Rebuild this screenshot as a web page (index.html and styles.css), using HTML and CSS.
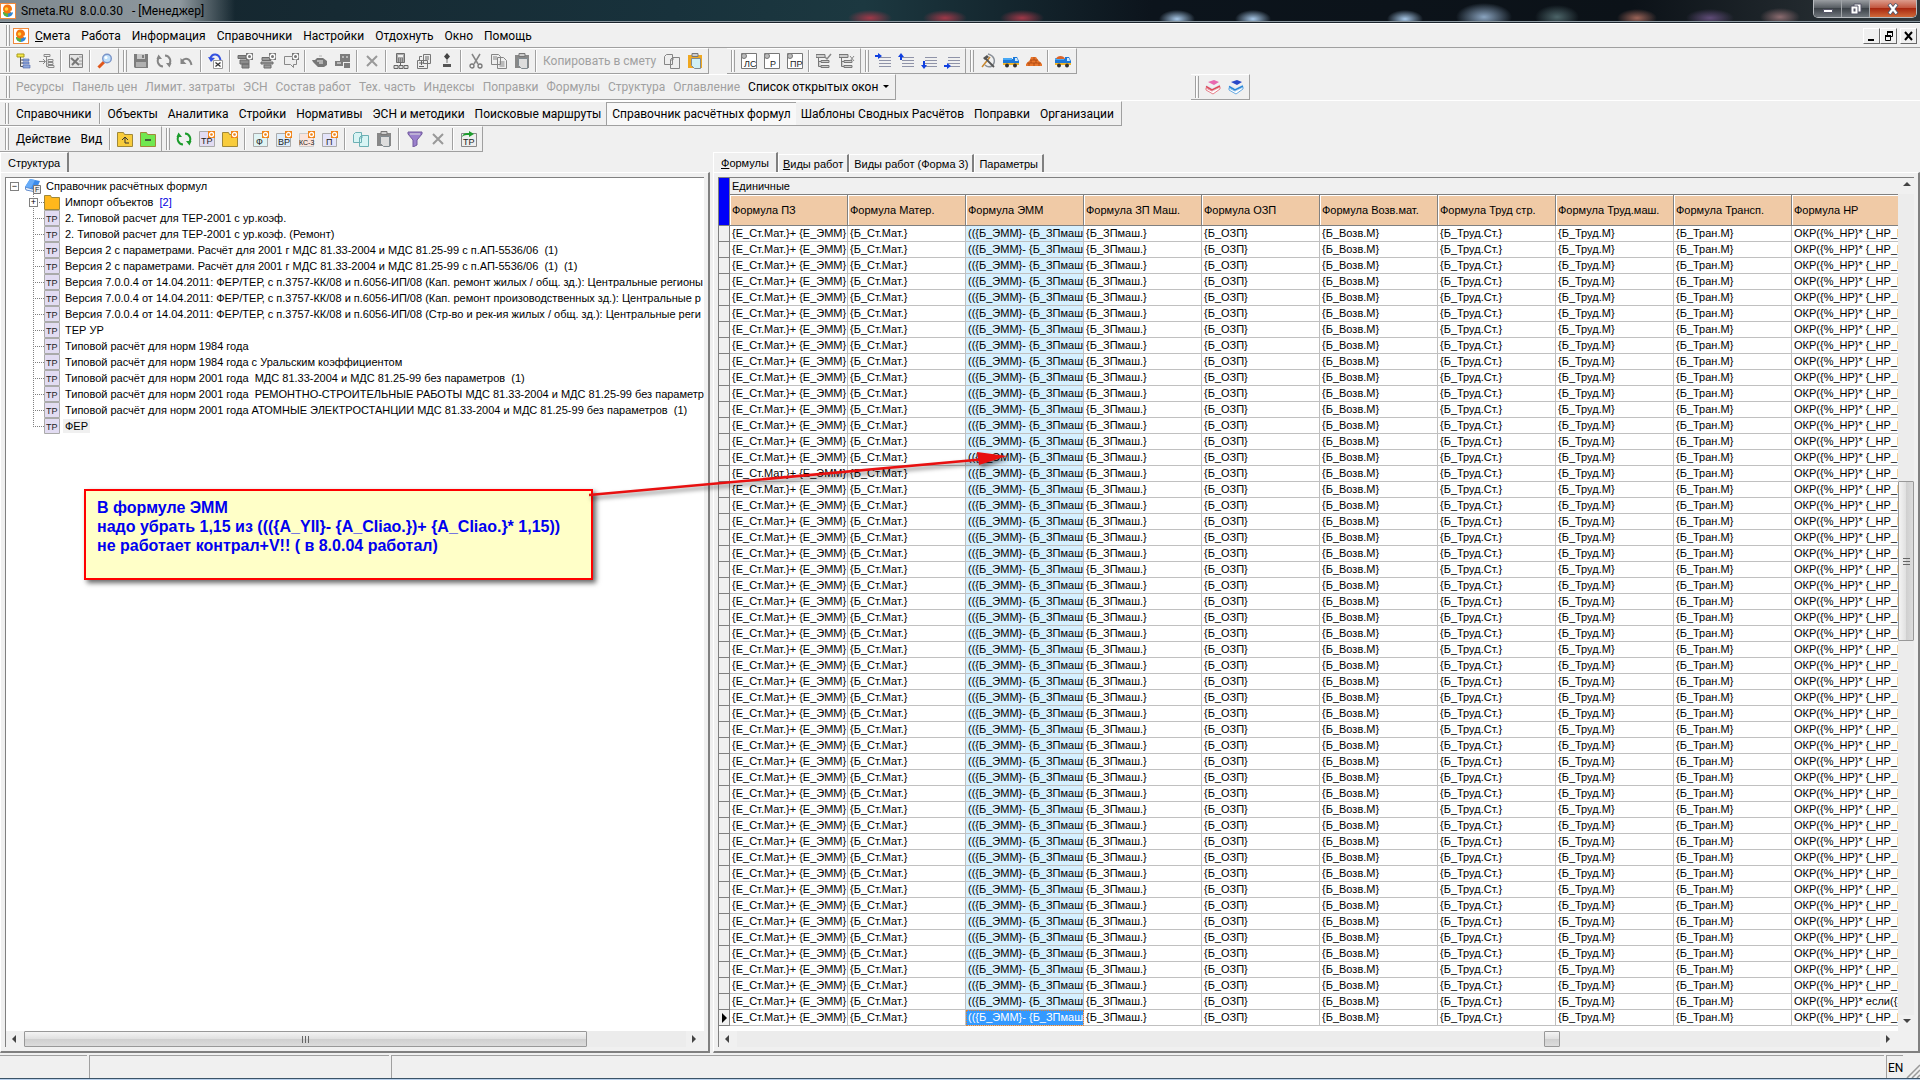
FILE: index.html
```html
<!DOCTYPE html>
<html lang="ru">
<head>
    <meta charset="UTF-8">
    <meta name="viewport" content="width=device-width, initial-scale=1.0">
    <title>Smeta.RU 8.0.0.30 - [Менеджер]</title>
    <link rel="stylesheet" href="styles.css">
</head>
<body>
    <svg class="sprite">
        <symbol id="logo" viewBox="0 0 16 16"><rect x=".5" y=".5" width="15" height="15" fill="#fff" stroke="#f08a3c"/><path d="M3 9a5 5 0 0 0 10 0z" fill="#2f86d8"/><path d="M3 9h5v5a5 5 0 0 1-5-5z" fill="#58b53c"/><circle cx="7.500" cy="6" r="4.500" fill="#f5760f"/><circle cx="6.500" cy="6" r="1.800" fill="#ffd23c"/><path d="M10 8l4-1-2 3z" fill="#fff"/></symbol>
        <symbol id="tree" viewBox="0 0 16 16"><path d="M1 1h7v3H1z" fill="#f6e94a" stroke="#a89b1a"/><path d="M4.500 4v9.500H7M4.500 7H7M4.500 10H7" fill="none" stroke="#555"/><path d="M7 6h6v2H7zM7 9h6v2H7zM7 12h7v3H7z" fill="#8fa8dc" stroke="#4a62a8" stroke-width=".6"/></symbol>
        <symbol id="tree-in" viewBox="0 0 16 16"><path d="M5 1.500h6v2H5zM9 6.500h5v2H9zM9 9.500h5v2H9zM9 12.500h6v2H9zM7.500 4v9.500H9M0 8.500h6M4 6l2.500 2.500L4 11" fill="none" stroke="#8a8a8a"/></symbol>
        <symbol id="excel" viewBox="0 0 16 16"><path d="M1.500 1.500h13v13h-13z" fill="#e4e4e4" stroke="#808080"/><path d="M3 5l8 7M10.500 5L4 12" stroke="#777" stroke-width="2"/><path d="M11 4h3M11 8h3M11 11h3" stroke="#999"/></symbol>
        <symbol id="find" viewBox="0 0 16 16"><path d="M1.500 14.500L7 9" stroke="#e0571c" stroke-width="3"/><circle cx="10" cy="5.500" r="4.300" fill="#bfe0fb" stroke="#7a94c8" stroke-width="1.400"/><circle cx="9" cy="4.500" r="1.500" fill="#fff"/></symbol>
        <symbol id="save" viewBox="0 0 16 16"><path d="M1 1h14v14H2l-1-1z" fill="#7d7d7d"/><path d="M4 1h8v5H4z" fill="#c9c9c9"/><path d="M9 2h2v3H9z" fill="#7d7d7d"/><path d="M3 9h10v5H3z" fill="#b0b0b0"/></symbol>
        <symbol id="refresh" viewBox="0 0 16 16"><path d="M9 2.500a5.500 5.500 0 0 1 4 9M7 13.500a5.500 5.500 0 0 1-4-9" fill="none" stroke="currentColor" stroke-width="2"/><path d="M10 10h5.500l-2 4.500zM6 6H.500l2-4.500z" fill="currentColor"/></symbol>
        <symbol id="undo" viewBox="0 0 16 16"><path d="M3 8c3-3.500 8-3 9.500 4" fill="none" stroke="#858585" stroke-width="2"/><path d="M1.500 5v6h6z" fill="#858585"/></symbol>
        <symbol id="undo-doc" viewBox="0 0 16 16"><path d="M2 6C4-.500 11 0 12.500 7" fill="none" stroke="#3452e0" stroke-width="2"/><path d="M0 4l3 5 4-4z" fill="#3452e0"/><path d="M5.500 7.500h9v8h-9z" fill="#fff" stroke="#999"/><path d="M7.500 9.500l5 4M12.500 9.500l-5 4" stroke="#333" stroke-width="1.300"/></symbol>
        <symbol id="gear" viewBox="0 0 16 16"><path d="M9 0h7v7H9z" fill="#777"/><circle cx="12.500" cy="3.500" r="2.200" fill="none" stroke="#fff" stroke-width="1.400"/></symbol>
        <symbol id="stack-up" viewBox="0 0 16 16"><path d="M1 2.500h8v3H1zM3 7h9v4H3zM5 11h7v4H5z" fill="#8c8c8c" stroke="#6c6c6c"/><use href="#gear"/></symbol>
        <symbol id="stack-down" viewBox="0 0 16 16"><path d="M2 4.500h9v3H2zM1 9h12v2H1zM4 12h7v3H4z" fill="#9c9c9c" stroke="#6c6c6c"/><use href="#gear"/></symbol>
        <symbol id="comment" viewBox="0 0 16 16"><path d="M1.500 3.500h12v8h-3v3l-3-3h-6z" fill="#eee" stroke="#888"/><use href="#gear"/></symbol>
        <symbol id="pot" viewBox="0 0 16 16"><path d="M0 7h3l2-2h6l4 3v4l-3 2H6L1 9z" fill="#777"/><path d="M5 8h6M7 3h3M7 10h4" stroke="#c8c8c8" stroke-width="1.500"/></symbol>
        <symbol id="blocks" viewBox="0 0 16 16"><path d="M5 1h10v8H5zM0 8h8v5H0zM9 10h6v5H9z" fill="#7c7c7c"/><path d="M7 3h2v2H7zM11 3h2v2h-2zM2 9h4v2H2z" fill="#b8b8b8"/></symbol>
        <symbol id="cross" viewBox="0 0 16 16"><path d="M3 3l10 10M13 3L3 13" stroke="#999" stroke-width="2"/></symbol>
        <symbol id="calc" viewBox="0 0 16 16"><path d="M3.500.500h8v9h-8z" fill="#aaa" stroke="#6c6c6c"/><path d="M5 2h5v2H5z" fill="#eee"/><path d="M5 6h5M5 8h5" stroke="#555" stroke-dasharray="1 1"/><path d="M7.500 10v2M1 12.500h4v3H1zM6 12.500h4v3H6zM11 12.500h4v3h-4z" fill="#ddd" stroke="#666"/></symbol>
        <symbol id="page-plus" viewBox="0 0 16 16"><path d="M7.500 1.500h7v9h-7zM1.500 7.500h10v8h-10z" fill="#eee" stroke="#777"/><path d="M9 4h4M9 6h4M3 10h5M5.500 8v4M3 13.500h5" stroke="#666"/><path d="M3.500 7V3.500H6" fill="none" stroke="#777"/></symbol>
        <symbol id="plus-minus" viewBox="0 0 16 16"><path d="M8 0l3 3.500L8 7 5 3.500z" fill="#444"/><path d="M8 7v3" stroke="#777"/><path d="M4 11h8v3H4z" fill="#555"/></symbol>
        <symbol id="cut" viewBox="0 0 16 16"><path d="M4 1l6 10M12 1L6 11" stroke="#858585" stroke-width="1.500"/><circle cx="4" cy="13" r="2" fill="none" stroke="#777" stroke-width="1.300"/><circle cx="12" cy="13" r="2" fill="none" stroke="#777" stroke-width="1.300"/></symbol>
        <symbol id="copy" viewBox="0 0 16 16"><path d="M.500 1.500h7l2 2v8h-9zM6.500 4.500h6l3 3v8h-9z" fill="var(--fill,#eee)" stroke="currentColor"/><path d="M2 4h4M2 6h4M8.500 9h5M8.500 11h5M8.500 13h5" stroke="currentColor"/></symbol>
        <symbol id="copy-blank" viewBox="0 0 16 16"><path d="M.500 3.500l2-2h6v10h-8zM6.500 6.500l2-2h7v11h-9z" fill="var(--fill,#eee)" stroke="currentColor"/><path d="M9 5v2H7" fill="none" stroke="currentColor"/></symbol>
        <symbol id="paste" viewBox="0 0 16 16"><path d="M1 2h14v13H1z" fill="var(--board,#888)"/><path d="M5 .500h6v3H5z" fill="#ccc" stroke="#777"/><path d="M4.500 5.500h9v10h-6l-3-3z" fill="var(--fill,#ddd)" stroke="#808a90"/></symbol>
        <symbol id="check-tree" viewBox="0 0 16 16"><path d="M0 1.500h9v3H0zM5 7.500h8v2H5zM5 12.500h8v2H5zM2.500 5v8.500H5M2.500 8.500H5" fill="#ccc" stroke="#777"/><path d="M9 4l2 2 4-5" fill="none" stroke="#888" stroke-width="1.500"/></symbol>
        <symbol id="cross-tree" viewBox="0 0 16 16"><path d="M0 1.500h9v3H0zM5 7.500h8v2H5zM5 12.500h8v2H5zM2.500 5v8.500H5M2.500 8.500H5" fill="#ccc" stroke="#777"/><path d="M11 3l4 5M15 3l-4 5" stroke="#888"/></symbol>
        <symbol id="lines" viewBox="0 0 16 16"><path d="M4 4.500h12M4 7.500h12M4 10.500h12M4 13.500h12" stroke="#8f93a8"/></symbol>
        <symbol id="tools" viewBox="0 0 16 16"><path d="M2 14L10 4" stroke="#c8862c" stroke-width="1.500"/><path d="M8 1c7 2 8 8 4 12-2 1-5 1-7-1" fill="none" stroke="#8a9098" stroke-width="1.500"/><path d="M5 5l9 9" stroke="#555" stroke-width="1.800"/><path d="M3 5l4-3 2 2-4 3z" fill="#555"/></symbol>
        <symbol id="truck" viewBox="0 0 16 16"><path d="M0 6h10V4h4l2 4v4H0z" fill="#1c78d8"/><path d="M0 5h9v2H0z" fill="#48a8f4"/><path d="M12 5h2l1 3h-3z" fill="#cfe8fa"/><path d="M0 10h16v2H0z" fill="#f0b428"/><circle cx="4" cy="12.500" r="2" fill="#333"/><circle cx="12" cy="12.500" r="2" fill="#333"/></symbol>
        <symbol id="bricks" viewBox="0 0 16 16"><path d="M5 4h5l2 3 4 4v2H0v-2l4-4z" fill="#e8762c"/><path d="M4 7h8M1 10h14M8 4v3M5 7v3M10 7v3M3 10v3M8 10v3M13 10v3" stroke="#a84410" stroke-width=".8"/></symbol>
        <symbol id="books" viewBox="0 0 16 16"><path d="M1 9l6 3 8-4v2l-7 5-7-4z" fill="#fff" stroke="currentColor" stroke-width=".7"/><path d="M1 6l7 3 7-4v3l-7 4-7-3z" fill="#dde6f4"/><path d="M1 7.500l6 3.500 8-4" fill="none" stroke="currentColor" stroke-width="1.500"/><path d="M3 3l6-2 5 2-5 3z" fill="var(--cover)"/></symbol>
        <symbol id="tp" viewBox="0 0 16 16"><path d="M.500.500h15v15H.500z" fill="#e2dcf2" stroke="#aaa"/></symbol>
        <symbol id="orange-gear" viewBox="0 0 16 16"><path d="M9 0h7v7H9z" fill="#f08418"/><circle cx="12.500" cy="3.500" r="2" fill="none" stroke="#fff" stroke-width="1.300"/></symbol>
        <symbol id="folder" viewBox="0 0 16 16"><path d="M.500 1.500h6l1 2h8v12H.500z" fill="var(--fill,#f8cc3c)" stroke="#a08838"/></symbol>
        <symbol id="filter" viewBox="0 0 16 16"><path d="M1 1h14v2l-5 6v5l-4 2V9L1 3z" fill="#9a80cc" stroke="#70589c"/><path d="M3 3h10" stroke="#ddd"/></symbol>
        <symbol id="book" viewBox="0 0 16 16"><path d="M5 1l10 2-4 9L0 9z" fill="#3c8cec"/><path d="M0 9l11 3v2L1 12z" fill="#e8f0fa" stroke="#2860b8" stroke-width=".7"/><path d="M5 1l5 1-4 8-6-1z" fill="#68acf8"/><path d="M8.500 7.500h7v8h-7z" fill="#eee" stroke="#777"/></symbol>
    </svg>

    <header class="titlebar">
        <svg class="icon"><use href="#logo"/></svg>
        <h1>Smeta.RU&nbsp; 8.0.0.30 &nbsp; - [Менеджер]</h1>
        <div class="window-buttons">
            <button aria-label="Свернуть"><svg viewBox="0 0 12 12"><path d="M1.500 6.500h9v3h-9z" fill="#fff" stroke="#556"/></svg></button>
            <button aria-label="Развернуть"><svg viewBox="0 0 12 12"><path d="M4 1h7v8H4z" fill="#fff" stroke="#556"/><path d="M1 3h7v8H1z" fill="#fff" stroke="#556"/><path d="M3.500 5.500h2v3h-2z" fill="#556"/></svg></button>
            <button class="close" aria-label="Закрыть"><svg viewBox="0 0 12 12"><path d="M2 1l8 10M10 1L2 11" stroke="#545c70" stroke-width="4"/><path d="M2.500 1.500l7 9M9.500 1.500l-7 9" stroke="#fff" stroke-width="2.200"/></svg></button>
        </div>
    </header>

    <nav class="menubar">
        <i class="grip"></i>
        <svg class="icon"><use href="#logo"/></svg>
        <button><u>С</u>мета</button>
        <button>Работа</button>
        <button>Информация</button>
        <button>Справочники</button>
        <button>Настройки</button>
        <button>Отдохнуть</button>
        <button>Окно</button>
        <button>Помощь</button>
        <div class="mdi-buttons">
            <button aria-label="Свернуть"><svg viewBox="0 0 12 12"><path d="M2 9h6v2H2z"/></svg></button>
            <button aria-label="Восстановить"><svg viewBox="0 0 12 12"><path d="M4.500 2.500h5v4h-5zM2.500 6.500h5v4h-5z" fill="#f0f0f0" stroke="#000"/><path d="M4 1h6v2H4zM2 5h6v2H2z"/></svg></button>
            <button aria-label="Закрыть"><svg viewBox="0 0 12 12"><path d="M2 2l7 8M9 2l-7 8" stroke="#000" stroke-width="2"/></svg></button>
        </div>
    </nav>

    <div class="toolbar-row">
        <div class="toolbar first">
            <i class="grip"></i>
            <button class="tool"><svg class="icon"><use href="#tree"/></svg></button>
            <button class="tool"><svg class="icon"><use href="#tree-in"/></svg></button>
            <i class="sep"></i>
            <button class="tool"><svg class="icon"><use href="#excel"/></svg></button>
            <i class="sep"></i>
            <button class="tool"><svg class="icon"><use href="#find"/></svg></button>
        </div>
        <div class="toolbar">
            <i class="grip"></i>
            <button class="tool"><svg class="icon"><use href="#save"/></svg></button>
            <button class="tool"><svg class="icon"><use href="#refresh"/></svg></button>
            <button class="tool"><svg class="icon"><use href="#undo"/></svg></button>
            <i class="sep"></i>
            <button class="tool"><svg class="icon"><use href="#undo-doc"/></svg></button>
            <i class="sep"></i>
            <button class="tool"><svg class="icon"><use href="#stack-up"/></svg></button>
            <button class="tool"><svg class="icon"><use href="#stack-down"/></svg></button>
            <button class="tool"><svg class="icon"><use href="#comment"/></svg></button>
            <i class="sep"></i>
            <button class="tool"><svg class="icon"><use href="#pot"/></svg></button>
            <button class="tool"><svg class="icon"><use href="#blocks"/></svg></button>
            <i class="sep"></i>
            <button class="tool"><svg class="icon"><use href="#cross"/></svg></button>
            <i class="sep"></i>
            <button class="tool"><svg class="icon"><use href="#calc"/></svg></button>
            <button class="tool"><svg class="icon"><use href="#page-plus"/></svg></button>
            <button class="tool"><svg class="icon"><use href="#plus-minus"/></svg></button>
            <i class="sep"></i>
            <button class="tool"><svg class="icon"><use href="#cut"/></svg></button>
            <button class="tool"><svg class="icon"><use href="#copy"/></svg></button>
            <button class="tool"><svg class="icon"><use href="#paste"/></svg></button>
            <i class="sep"></i>
            <button class="text-tool" disabled>Копировать в смету</button>
            <button class="tool"><svg class="icon"><use href="#copy-blank"/></svg></button>
            <button class="tool paste-on"><svg class="icon"><use href="#paste"/></svg></button>
        </div>
        <div class="toolbar detached">
            <i class="grip"></i>
            <button class="tool doc"><svg class="icon" viewBox="0 0 16 16"><path d="M.5.5h15v15H.5z" fill="#fff" stroke="#777"/><circle cx="3" cy="3" r="2.500" fill="#bbb" stroke="#777"/><text x="3" y="14">ЛС</text></svg></button>
            <button class="tool doc"><svg class="icon" viewBox="0 0 16 16"><path d="M.5.5h15v15H.5z" fill="#fff" stroke="#777"/><circle cx="3" cy="3" r="2.500" fill="#bbb" stroke="#777"/><text x="6" y="14">Р</text></svg></button>
            <button class="tool doc"><svg class="icon" viewBox="0 0 16 16"><path d="M.5.5h15v15H.5z" fill="#fff" stroke="#777"/><circle cx="3" cy="3" r="2.500" fill="#bbb" stroke="#777"/><text x="3" y="14">ПР</text></svg></button>
            <i class="sep"></i>
            <button class="tool"><svg class="icon"><use href="#check-tree"/></svg></button>
            <button class="tool"><svg class="icon"><use href="#cross-tree"/></svg></button>
        </div>
        <div class="toolbar">
            <i class="grip"></i>
            <button class="tool"><svg class="icon" viewBox="0 0 16 16"><use href="#lines"/><path d="M0 2h3V0l4 3-4 3V4H0z" fill="#1040e0"/></svg></button>
            <button class="tool"><svg class="icon" viewBox="0 0 16 16"><use href="#lines"/><path d="M2 7V4H0l3-4 3 4H4v3z" fill="#1040e0"/></svg></button>
            <button class="tool"><svg class="icon" viewBox="0 0 16 16"><use href="#lines"/><path d="M2 8v4H0l3 4 3-4H4V8z" fill="#1040e0"/></svg></button>
            <button class="tool"><svg class="icon" viewBox="0 0 16 16"><use href="#lines"/><path d="M0 12h3v-2l4 3-4 3v-2H0z" fill="#1040e0"/></svg></button>
        </div>
        <div class="toolbar">
            <i class="grip"></i>
            <button class="tool"><svg class="icon"><use href="#tools"/></svg></button>
            <button class="tool"><svg class="icon"><use href="#truck"/></svg></button>
            <button class="tool"><svg class="icon"><use href="#bricks"/></svg></button>
            <i class="sep"></i>
            <button class="tool"><svg class="icon" viewBox="0 0 16 16"><use href="#truck"/><path d="M1 6c1-4 8-4 9 0z" fill="#d8642c"/></svg></button>
        </div>
    </div>

    <div class="toolbar-row">
        <div class="toolbar first">
            <i class="grip"></i>
            <button class="text-tool" disabled>Ресурсы</button>
            <button class="text-tool" disabled>Панель цен</button>
            <button class="text-tool" disabled>Лимит. затраты</button>
            <button class="text-tool" disabled>ЭСН</button>
            <button class="text-tool" disabled>Состав работ</button>
            <button class="text-tool" disabled>Тех. часть</button>
            <button class="text-tool" disabled>Индексы</button>
            <button class="text-tool" disabled>Поправки</button>
            <button class="text-tool" disabled>Формулы</button>
            <button class="text-tool" disabled>Структура</button>
            <button class="text-tool" disabled>Оглавление</button>
            <button class="text-tool dropdown">Список открытых окон</button>
        </div>
        <div class="toolbar library">
            <i class="grip"></i>
            <button class="tool red"><svg class="icon"><use href="#books"/></svg></button>
            <button class="tool blue"><svg class="icon"><use href="#books"/></svg></button>
        </div>
    </div>

    <div class="toolbar-row ruled">
        <div class="toolbar wide">
            <i class="grip"></i>
            <button class="text-tool">Справочники</button>
            <i class="sep"></i>
            <button class="text-tool">Объекты</button>
            <button class="text-tool">Аналитика</button>
            <button class="text-tool">Стройки</button>
            <button class="text-tool">Нормативы</button>
            <button class="text-tool">ЭСН и методики</button>
            <button class="text-tool">Поисковые маршруты</button>
            <button class="text-tool pressed">Справочник расчётных формул</button>
            <button class="text-tool">Шаблоны Сводных Расчётов</button>
            <button class="text-tool">Поправки</button>
            <button class="text-tool">Организации</button>
        </div>
    </div>

    <div class="toolbar-row">
        <div class="toolbar wide">
            <i class="grip"></i>
            <button class="text-tool">Действие</button>
            <button class="text-tool">Вид</button>
            <i class="sep"></i>
            <button class="tool"><svg class="icon" viewBox="0 0 16 16"><use href="#folder"/><path d="M5 9l3-3 3 3M8 6v6h4" fill="none" stroke="#333"/></svg></button>
            <button class="tool green-folder"><svg class="icon" viewBox="0 0 16 16"><use href="#folder"/><path d="M5 9h6" stroke="#333" stroke-width="1.500"/></svg></button>
        </div>
        <div class="toolbar roomy">
            <i class="grip"></i>
            <button class="tool green"><svg class="icon"><use href="#refresh"/></svg></button>
            <button class="tool doc"><svg class="icon" viewBox="0 0 16 16"><use href="#tp"/><text x="2" y="13">ТР</text><use href="#orange-gear"/></svg></button>
            <button class="tool"><svg class="icon" viewBox="0 0 16 16"><use href="#folder"/><use href="#orange-gear"/></svg></button>
            <i class="sep"></i>
            <button class="tool doc"><svg class="icon" viewBox="0 0 16 16"><path d="M.5 2.500h14v13H.5z" fill="#e0f4f4" stroke="#aaa"/><text x="3" y="14">Ф</text><use href="#orange-gear"/></svg></button>
            <button class="tool doc"><svg class="icon" viewBox="0 0 16 16"><path d="M.5 2.500h14v13H.5z" fill="#dcecfa" stroke="#aaa"/><text x="2" y="14">ВР</text><use href="#orange-gear"/></svg></button>
            <button class="tool doc"><svg class="icon" viewBox="0 0 16 16"><path d="M.5 2.500h14v13H.5z" fill="#fae4dc" stroke="#ccc"/><text x="0" y="14" class="small">КС-3</text><use href="#orange-gear"/></svg></button>
            <button class="tool doc"><svg class="icon" viewBox="0 0 16 16"><path d="M.5 2.500h14v13H.5z" fill="#e4e4fa" stroke="#aaa"/><text x="4" y="14">П</text><use href="#orange-gear"/></svg></button>
            <i class="sep"></i>
            <button class="tool copy-on"><svg class="icon"><use href="#copy-blank"/></svg></button>
            <button class="tool"><svg class="icon"><use href="#paste"/></svg></button>
            <i class="sep"></i>
            <button class="tool"><svg class="icon"><use href="#filter"/></svg></button>
            <button class="tool"><svg class="icon"><use href="#cross"/></svg></button>
            <i class="sep"></i>
            <button class="tool doc"><svg class="icon" viewBox="0 0 16 16"><path d="M.5 2.500h15v13H.5z" fill="#eee" stroke="#888"/><text x="2" y="14">ТР</text><path d="M1 6c1-4 4-4 7-4V0l5 3-5 3V4C5 4 3 4 1 6z" fill="#1c9c2c"/></svg></button>
        </div>
    </div>

    <main class="workspace">
        <section class="pane tree-pane">
            <div class="tabs">
                <button class="tab active">Структура</button>
            </div>
            <div class="pane-body">
                <div class="pane-inner">
                    <ul class="tree" id="catalog">
                        <li class="root"><button class="expander">−</button><svg class="icon" viewBox="0 0 16 16"><use href="#book"/><text x="10" y="14" class="small">F</text></svg><span>Справочник расчётных формул</span></li>
                    </ul>
                    <div class="hscroll">
                        <b class="arrow left"></b>
                        <div class="track"><div class="thumb tree-thumb"><i></i></div></div>
                        <b class="arrow right"></b>
                    </div>
                </div>
            </div>
        </section>

        <section class="pane grid-pane">
            <div class="tabs">
                <button class="tab active"><u>Ф</u>ормулы</button>
                <button class="tab"><u>В</u>иды работ</button>
                <button class="tab">Виды работ (Форма 3)</button>
                <button class="tab">Параметры</button>
            </div>
            <div class="pane-body">
                <div class="pane-inner">
                    <div class="grid-area">
                        <div class="grid-clip">
                            <table>
                                <thead>
                                    <tr><th class="corner" rowspan="2"></th><th class="band" colspan="10">Единичные</th></tr>
                                    <tr class="columns">
                                        <th>Формула ПЗ</th>
                                        <th>Формула Матер.</th>
                                        <th>Формула ЭММ</th>
                                        <th>Формула ЗП Маш.</th>
                                        <th>Формула ОЗП</th>
                                        <th>Формула Возв.мат.</th>
                                        <th>Формула Труд стр.</th>
                                        <th>Формула Труд.маш.</th>
                                        <th>Формула Трансп.</th>
                                        <th>Формула НР</th>
                                    </tr>
                                </thead>
                                <tbody id="rows"></tbody>
                            </table>
                        </div>
                        <div class="vscroll">
                            <b class="arrow up"></b>
                            <div class="track"><div class="thumb"><i></i></div></div>
                            <b class="arrow down"></b>
                        </div>
                    </div>
                    <div class="hscroll grid-scroll">
                        <b class="arrow left"></b>
                        <div class="track"><div class="thumb grid-thumb"></div></div>
                        <b class="arrow right"></b>
                    </div>
                </div>
            </div>
        </section>
    </main>

    <footer class="statusbar">
        <span></span>
        <span></span>
        <span></span>
        <span class="lang">EN</span>
        <svg class="resize" viewBox="0 0 14 14"><path d="M1 14L14 1M6 14l8-8M11 14l3-3" stroke="#999" stroke-width="1.500"/></svg>
    </footer>
    <div class="taskbar"></div>

    <aside class="note">В формуле ЭММ<br>надо убрать 1,15 из ((({A_YII}- {A_CIiao.})+ {A_CIiao.}* 1,15))<br>не работает контрал+V!! ( в 8.0.04 работал)</aside>
    <svg class="pointer" viewBox="0 0 430 60">
        <path d="M3 45L400 9" stroke="#e81010" stroke-width="2.500"/>
        <path d="M391 2l30 4-28 9z" fill="#e81010"/>
    </svg>

    <script>
        const items = [
            '2. Типовой расчет для ТЕР-2001 с ур.коэф.',
            '2. Типовой расчет для ТЕР-2001 с ур.коэф. (Ремонт)',
            'Версия 2 с параметрами. Расчёт для 2001 г МДС 81.33-2004 и МДС 81.25-99 с п.АП-5536/06&nbsp; (1)',
            'Версия 2 с параметрами. Расчёт для 2001 г МДС 81.33-2004 и МДС 81.25-99 с п.АП-5536/06&nbsp; (1)&nbsp; (1)',
            'Версия 7.0.0.4 от 14.04.2011: ФЕР/ТЕР, с п.3757-КК/08 и п.6056-ИП/08 (Кап. ремонт жилых / общ. зд.): Центральные регионы',
            'Версия 7.0.0.4 от 14.04.2011: ФЕР/ТЕР, с п.3757-КК/08 и п.6056-ИП/08 (Кап. ремонт произоводственных зд.): Центральные р',
            'Версия 7.0.0.4 от 14.04.2011: ФЕР/ТЕР, с п.3757-КК/08 и п.6056-ИП/08 (Стр-во и рек-ия жилых / общ. зд.): Центральные реги',
            'ТЕР УР',
            'Типовой расчёт для норм 1984 года',
            'Типовой расчёт для норм 1984 года с Уральским коэффициентом',
            'Типовой расчёт для норм 2001 года&nbsp; МДС 81.33-2004 и МДС 81.25-99 без параметров&nbsp; (1)',
            'Типовой расчёт для норм 2001 года&nbsp; РЕМОНТНО-СТРОИТЕЛЬНЫЕ РАБОТЫ МДС 81.33-2004 и МДС 81.25-99 без параметро',
            'Типовой расчёт для норм 2001 года АТОМНЫЕ ЭЛЕКТРОСТАНЦИИ МДС 81.33-2004 и МДС 81.25-99 без параметров&nbsp; (1)',
            'ФЕР'
        ];
        let list = '<li><i class="branch"></i><button class="expander">+</button><svg class="icon import"><use href="#folder"/></svg><span>Импорт объектов&nbsp; <em>[2]</em></span></li>';
        items.forEach(name => {
            list += `<li><i class="branch"></i><svg class="icon" viewBox="0 0 16 16"><use href="#tp"/><text x="2" y="12">ТР</text></svg><span>${name}</span></li>`;
        });
        document.getElementById('catalog').innerHTML += list;

        const cells = ['{Е_Ст.Мат.}+ {Е_ЭММ}', '{Б_Ст.Мат.}', '(({Б_ЭММ}- {Б_ЗПмаш.', '{Б_ЗПмаш.}', '{Б_ОЗП}', '{Б_Возв.М}', '{Б_Труд.Ст.}', '{Б_Труд.М}', '{Б_Тран.М}'];
        const rowCount = 50;
        let rows = '';
        for (let i = 1; i <= rowCount; i++) {
            const last = i === rowCount - 1 ? 'ОКР({%_НР}* если({&gt;' : 'ОКР({%_НР}* {_НР_Р';
            rows += `<tr><th></th>${cells.map(c => `<td>${c}</td>`).join('')}<td>${last}</td></tr>`;
        }
        document.getElementById('rows').innerHTML = rows;
    </script>
</body>
</html>
```
FILE: styles.css
```css
* {
    box-sizing: border-box;
}
body {
    margin: 0;
    height: 100vh;
    display: flex;
    flex-direction: column;
    overflow: hidden;
    background: #f0f0f0;
    color: #000;
    font-family: Roboto, "Noto Sans", sans-serif;
    font-size: 12px;
}
button {
    padding: 0;
    border: 0;
    background: none;
    color: inherit;
    font: inherit;
    white-space: nowrap;
}
.sprite {
    display: none;
}
.icon {
    display: block;
    flex: none;
    width: 16px;
    height: 16px;
}

/* window title */
.titlebar {
    display: flex;
    align-items: center;
    gap: 5px;
    flex: none;
    height: 23px;
    border-bottom: 1px solid #1c242c;
    box-shadow: inset 0 -1px #8c98a0;
    background:
        linear-gradient(90deg, #7e888e, #8e989e 180px, transparent 235px),
        radial-gradient(ellipse 22px 8px at 870px 18px, #a03848, transparent),
        radial-gradient(ellipse 22px 8px at 945px 18px, #a03848, transparent),
        radial-gradient(ellipse 22px 8px at 1022px 18px, #a03848, transparent),
        radial-gradient(ellipse 18px 9px at 1177px 19px, #a8c8e8, transparent),
        radial-gradient(ellipse 18px 9px at 1253px 19px, #a8c8e8, transparent),
        radial-gradient(ellipse 18px 9px at 1405px 19px, #a8c8e8, transparent),
        radial-gradient(ellipse 28px 14px at 1484px 17px, #8aa4c0, transparent),
        radial-gradient(ellipse 22px 12px at 1557px 17px, #4c6468, transparent),
        radial-gradient(ellipse 20px 9px at 1637px 18px, #9c6458, transparent),
        radial-gradient(ellipse 24px 9px at 1710px 18px, #604c78, transparent),
        radial-gradient(ellipse 20px 9px at 1780px 17px, #8c6c70, transparent),
        linear-gradient(90deg, #14222a, #18323c 35%, #1c3840 45%, #0c141c 60%, #0c1218 85%, #30383c);
}
.titlebar h1 {
    margin: 0;
    font-size: 12px;
    font-weight: 400;
}
.window-buttons {
    display: flex;
    align-self: flex-start;
    margin-left: auto;
    margin-right: 3px;
    height: 18px;
    border: 1px solid #b8bcc0;
    border-top: 0;
    border-radius: 0 0 5px 5px;
    overflow: hidden;
}
.window-buttons button {
    width: 28px;
    border-right: 1px solid #a0a4a8;
    background: linear-gradient(#9a9ea2, #50565c 50%, #3c4248 50%, #70767c);
}
.window-buttons .close {
    width: 46px;
    border: 0;
    background: linear-gradient(#dc9c8c, #c05038 50%, #a82810 50%, #d06838);
}
.window-buttons svg {
    display: block;
    width: 12px;
    height: 12px;
    margin: 0 auto;
}

/* menu and toolbars */
.menubar {
    display: flex;
    align-items: center;
    gap: 1px;
    flex: none;
    height: 25px;
    padding-left: 2px;
    border-top: 1px solid #fff;
    border-bottom: 1px solid #a0a0a0;
}
.menubar > button {
    padding: 0 5px;
}
.mdi-buttons {
    display: flex;
    margin-left: auto;
    padding-right: 3px;
}
.mdi-buttons button {
    width: 17px;
    height: 16px;
    border: 1px solid;
    border-color: #fff #696969 #696969 #fff;
}
.mdi-buttons button:last-child {
    margin-left: 3px;
}
.mdi-buttons svg {
    display: block;
    width: 12px;
    height: 12px;
    margin: 0 auto;
}
.toolbar-row {
    display: flex;
    flex: none;
    height: 26px;
}
.ruled {
    border-top: 1px solid #fff;
}
.toolbar {
    display: flex;
    align-items: center;
    padding-right: 2px;
    border-top: 1px solid #fff;
    border-right: 1px solid #a0a0a0;
    border-bottom: 1px solid #a0a0a0;
}
.first {
    padding-left: 2px;
}
.detached {
    margin-left: 18px;
}
.library {
    margin-left: 295px;
}
.grip {
    flex: none;
    align-self: stretch;
    width: 4px;
    margin: 1px 2px 1px 4px;
    border: solid #a0a0a0;
    border-width: 0 1px;
    box-shadow: inset 1px 0 #fff;
}
.sep {
    flex: none;
    align-self: stretch;
    width: 2px;
    margin: 1px 2px;
    border-left: 1px solid #a0a0a0;
    border-right: 1px solid #fff;
}
.roomy .sep {
    margin: 1px 3px;
}
.tool {
    display: flex;
    justify-content: center;
    width: 23px;
    color: #858585;
}
.text-tool {
    padding: 0 4px;
}
.text-tool:disabled {
    color: #a0a0a0;
}
.wide {
    padding-left: 1px;
}
.wide .text-tool {
    padding: 0 5px;
}
.wide .pressed {
    align-self: stretch;
    border-top: 1px solid #a0a0a0;
    border-left: 1px solid #a0a0a0;
    background: #f8f8f8;
}
.dropdown::after {
    content: "";
    display: inline-block;
    margin-left: 5px;
    vertical-align: 3px;
    border: 3px solid transparent;
    border-top-color: #000;
    border-bottom: 0;
}
.red {
    --cover: #e868b0;
    color: #e04858;
}
.blue {
    --cover: #2848c8;
    color: #2888d8;
}
.green {
    color: #1c9c2c;
}
.green-folder {
    --fill: #70e850;
}
.copy-on {
    --fill: #d8f4f4;
    color: #6cb0b4;
}
.paste-on {
    --board: #f0a820;
    --fill: #d0f0f4;
}
.icon text {
    font-family: "Liberation Sans", sans-serif;
    font-size: 9px;
    fill: #222;
}
.icon .small {
    font-size: 7px;
}

/* panes */
.workspace {
    display: flex;
    gap: 3px;
    flex: 1;
    min-height: 0;
    font-family: "Liberation Sans", Arial, sans-serif;
    font-size: 11px;
}
.pane {
    display: flex;
    flex-direction: column;
    min-width: 0;
}
.tree-pane {
    flex: 0 0 710px;
}
.grid-pane {
    flex: 1;
}
.tabs {
    display: flex;
    align-items: flex-end;
    flex: none;
    height: 20px;
}
.tab {
    height: 18px;
    padding: 0 4px;
    border-top: 1px solid #fff;
    border-left: 1px solid #fff;
    border-right: 2px solid #808080;
}
.tab.active {
    height: 20px;
    padding: 0 7px;
}
.pane-body {
    flex: 1;
    min-height: 0;
    padding: 4px;
    border: solid;
    border-width: 1px 2px 2px 1px;
    border-color: #fff #808080 #808080 #fff;
}
.pane-inner {
    display: flex;
    flex-direction: column;
    height: 100%;
    border-top: 1px solid #808080;
    border-left: 1px solid #808080;
    background: #fff;
}
.tree {
    flex: 1;
    margin: 0;
    padding: 0;
    list-style: none;
    overflow: hidden;
    white-space: nowrap;
}
.tree li {
    position: relative;
    display: flex;
    align-items: center;
    height: 16px;
    padding-left: 27px;
}
.tree .root {
    padding-left: 19px;
}
.tree span {
    margin-left: 3px;
    padding: 1px 2px;
}
.tree li:last-child span {
    background: #f0f0f0;
}
.tree em {
    color: #0000e0;
    font-style: normal;
}
.branch {
    flex: none;
    width: 11px;
    height: 16px;
    background:
        repeating-linear-gradient(#808080 0 1px, transparent 1px 2px) 0 0 / 1px 100% no-repeat,
        repeating-linear-gradient(90deg, #808080 0 1px, transparent 1px 2px) 0 8px / 100% 1px no-repeat;
}
.tree li:last-child .branch {
    background-size: 1px 8px, 100% 1px;
}
.expander {
    position: absolute;
    left: 23px;
    width: 9px;
    height: 9px;
    border: 1px solid #808080;
    background: #fff;
    font-size: 9px;
    line-height: 7px;
}
.root .expander {
    left: 4px;
}
.import {
    --fill: #ffb81c;
}

/* grid */
.grid-area {
    display: flex;
    flex: 1;
    min-height: 0;
}
.grid-clip {
    flex: 1;
    min-width: 0;
    overflow: hidden;
}
table {
    width: 1191px;
    table-layout: fixed;
    border-collapse: separate;
    border-spacing: 0;
}
th, td {
    height: 16px;
    padding: 0 0 0 2px;
    overflow: hidden;
    border-right: 1px solid #c0c0c0;
    border-bottom: 1px solid #c0c0c0;
    font-weight: 400;
    line-height: 15px;
    text-align: left;
    white-space: nowrap;
}
.corner {
    width: 11px;
    border-color: #808080;
    background: #0000f8;
}
.band {
    height: 17px;
    border-color: #808080;
    background: #f0f0f0;
}
.columns th {
    height: 31px;
    border-color: #808080;
    background: #f0caa6;
    box-shadow: inset 1px 1px #fff;
}
tbody th {
    padding: 0;
    border-color: #808080;
    background: #f0f0f0;
}
tbody td:nth-child(4) {
    background: #d6f0ff;
}
tbody tr:last-child td:nth-child(4) {
    outline: 1px dotted #e08030;
    outline-offset: -1px;
    background: #3399ff;
    color: #fff;
}
tbody tr:last-child th::before {
    content: "";
    display: block;
    width: 0;
    margin-left: 3px;
    border: 5px solid transparent;
    border-left-color: #000;
    border-right: 0;
}

/* scrollbars */
.hscroll, .vscroll {
    display: flex;
    align-items: center;
    flex: none;
    background: #f0f0f0;
}
.hscroll {
    height: 16px;
}
.vscroll {
    flex-direction: column;
    width: 16px;
}
.grid-scroll {
    padding-right: 16px;
}
.track {
    display: flex;
    flex: 1;
    align-self: stretch;
    background: #ececec;
}
.vscroll .track {
    flex-direction: column;
}
.thumb {
    display: flex;
    align-items: center;
    justify-content: center;
    border: 1px solid #989898;
    border-radius: 1px;
    background: linear-gradient(#f4f4f4, #e0e0e0 50%, #cfcfcf 50%, #dcdcdc);
}
.thumb i {
    width: 7px;
    height: 7px;
    background: repeating-linear-gradient(90deg, #666 0 1px, transparent 1px 3px);
}
.vscroll .thumb {
    height: 160px;
    margin-top: 287px;
    background: linear-gradient(90deg, #f4f4f4, #e0e0e0 50%, #cfcfcf 50%, #dcdcdc);
}
.vscroll .thumb i {
    background: repeating-linear-gradient(#666 0 1px, transparent 1px 3px);
}
.tree-thumb {
    width: 85%;
}
.grid-thumb {
    width: 16px;
    margin-left: 70.6%;
}
.arrow {
    position: relative;
    flex: none;
    width: 18px;
    height: 16px;
}
.arrow::before {
    content: "";
    position: absolute;
    top: 4px;
    left: 6px;
    border: 4px solid transparent;
}
.arrow.left::before {
    border-right-color: #444;
    border-left: 0;
}
.arrow.right::before {
    border-left-color: #444;
    border-right: 0;
}
.arrow.up::before {
    border-bottom-color: #444;
    border-top: 0;
}
.arrow.down::before {
    border-top-color: #444;
    border-bottom: 0;
}

/* status */
.statusbar {
    display: flex;
    flex: none;
    height: 25px;
    padding-top: 2px;
    font-size: 12px;
}
.statusbar span {
    width: 300px;
    margin-right: 2px;
    border-top: 1px solid #a0a0a0;
    border-left: 1px solid #a0a0a0;
}
.statusbar span:first-child {
    width: 87px;
    border-left: 0;
}
.statusbar span:nth-child(3) {
    flex: 1;
}
.statusbar .lang {
    width: 17px;
    margin: 0;
    padding: 5px 0 0 1px;
    overflow: hidden;
}
.resize {
    align-self: flex-end;
    width: 14px;
    height: 14px;
    margin-left: 3px;
}
.taskbar {
    flex: none;
    height: 2px;
    border-top: 1px solid #3c5468;
    background: #b8d0ec;
}

/* annotation over the window */
.note {
    position: absolute;
    top: 489px;
    left: 84px;
    width: 509px;
    height: 91px;
    padding: 7px 11px;
    border: 2px solid #f00;
    background: #ffffc8;
    box-shadow: 3px 3px 5px rgba(0,0,0,0.6);
    color: #0000f0;
    font: bold 16px/19px "Liberation Sans", Arial, sans-serif;
    white-space: nowrap;
}
.pointer {
    position: absolute;
    top: 450px;
    left: 586px;
    width: 430px;
    height: 60px;
    filter: drop-shadow(2px 3px 2px rgba(0,0,0,0.5));
}
```
